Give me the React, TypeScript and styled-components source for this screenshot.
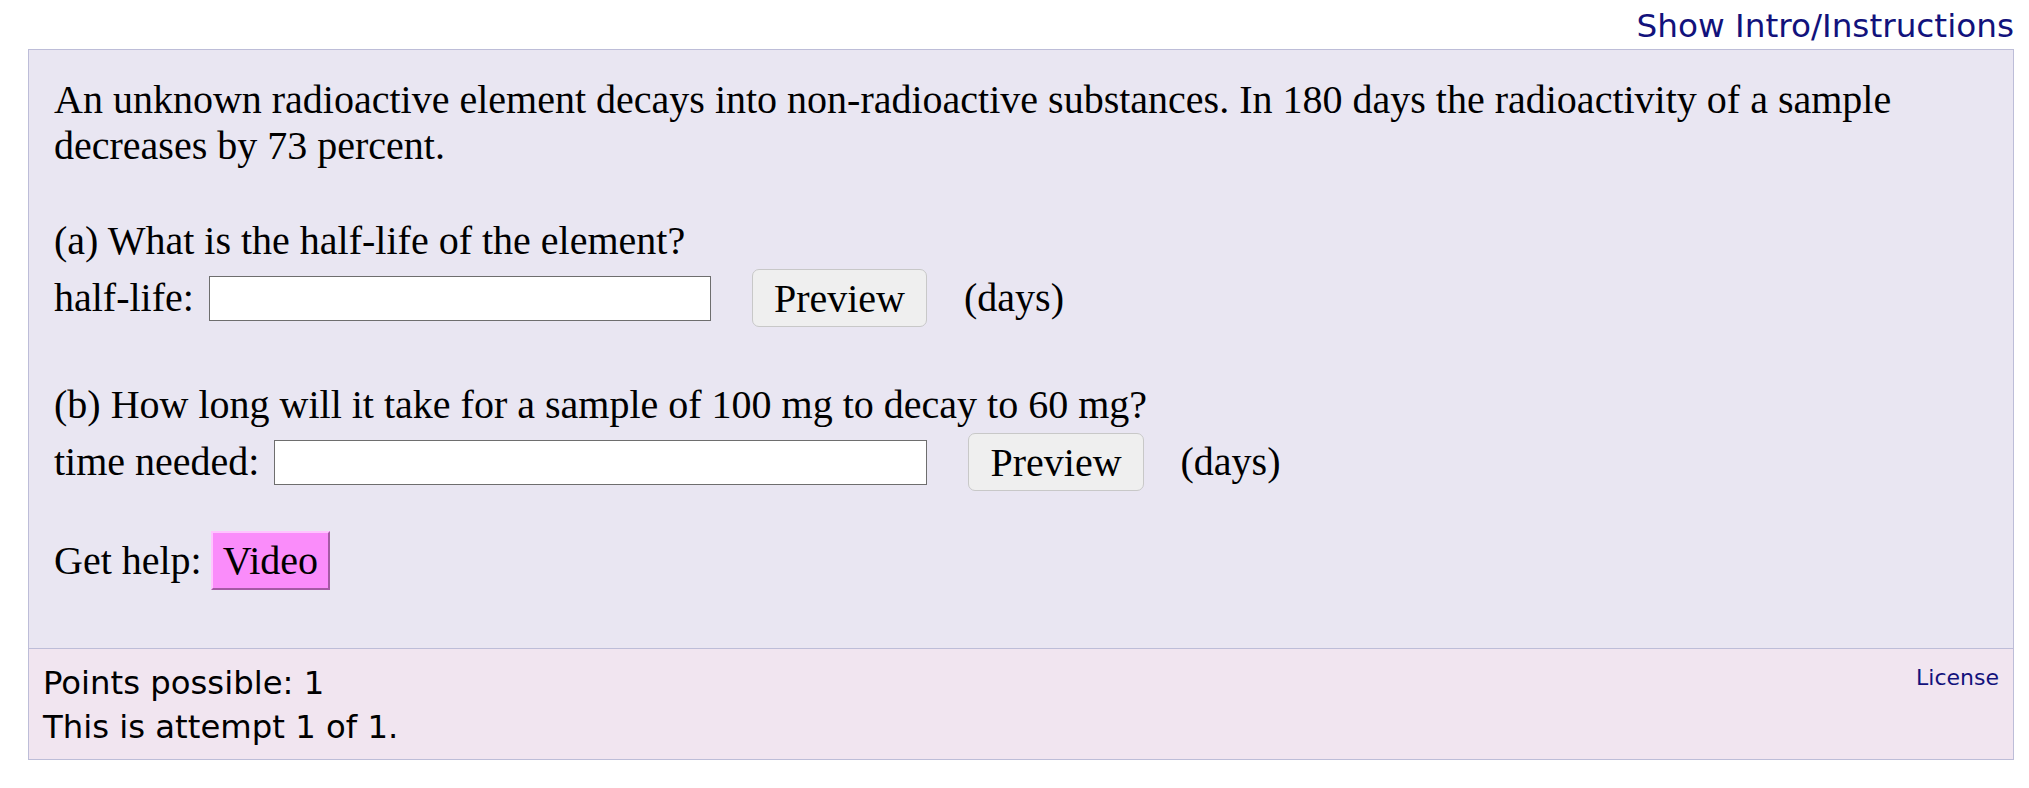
import React from "react";
import styled, { createGlobalStyle } from "styled-components";

const GlobalStyle = createGlobalStyle`
  html, body {
    margin: 0;
    padding: 0;
    background: #ffffff;
  }
  body {
    font-family: "Liberation Serif", "Times New Roman", serif;
    color: #000;
  }
`;

const Page = styled.div`
  padding: 0 15px 0 28px;
`;

const TopBar = styled.div`
  display: flex;
  justify-content: flex-end;
  padding-top: 6px;
  margin-bottom: 3px;
`;

const NavLink = styled.a`
  font-family: "DejaVu Sans", Verdana, sans-serif;
  font-size: 32.7px;
  line-height: 40px;
  color: #12127c;
  text-decoration: none;
  cursor: pointer;
`;

const QuestionBox = styled.div`
  border: 1px solid #bdbdd8;
`;

const QuestionBody = styled.div`
  background: #e9e6f2;
  padding: 27px 25px 58px;
  font-size: 40px;
  line-height: 46px;
`;

const Para = styled.p<{ $top?: number }>`
  margin: ${(p) => p.$top ?? 0}px 0 0;
`;

const AnswerRow = styled.div<{ $top: number; $h?: number }>`
  display: flex;
  align-items: center;
  height: ${(p) => p.$h ?? 58}px;
  margin-top: ${(p) => p.$top}px;
`;

const Label = styled.span`
  white-space: nowrap;
`;

const AnswerInput = styled.input<{ $w: number }>`
  box-sizing: border-box;
  width: ${(p) => p.$w}px;
  height: 45px;
  margin: 0 0 0 15px;
  border: 1px solid #6e6e6e;
  background: #ffffff;
  font-family: inherit;
  font-size: 28px;
  padding: 0 6px;
`;

const PreviewButton = styled.button`
  box-sizing: border-box;
  height: 58px;
  margin-left: 41px;
  padding: 0 21px;
  border: 1px solid #c8c8c8;
  border-radius: 7px;
  background: #efefef;
  font-family: "Liberation Serif", "Times New Roman", serif;
  font-size: 40px;
  color: #000;
  cursor: pointer;
`;

const Unit = styled.span`
  margin-left: 37px;
`;

const HelpButton = styled.button`
  box-sizing: border-box;
  height: 59px;
  margin-left: 9px;
  padding: 0 10px;
  border-width: 2px;
  border-style: solid;
  border-color: #ffc4ff #a45aa4 #a45aa4 #ffc4ff;
  background: #fa8cfa;
  font-family: "Liberation Serif", "Times New Roman", serif;
  font-size: 40px;
  color: #000;
  cursor: pointer;
`;

const Footer = styled.div`
  display: flex;
  justify-content: space-between;
  align-items: flex-start;
  border-top: 1px solid #bdbdd8;
  background: #f1e5f0;
  padding: 12px 14px 10px;
  font-family: "DejaVu Sans", Verdana, sans-serif;
`;

const FooterLines = styled.div`
  font-size: 32.3px;
  line-height: 44px;
  color: #000;
`;

const LicenseLink = styled.a`
  margin-top: 2px;
  font-size: 22px;
  line-height: 30px;
  color: #12127c;
  text-decoration: none;
  cursor: pointer;
`;

export default function App() {
  return (
    <Page>
      <GlobalStyle />
      <TopBar>
        <NavLink>Show Intro/Instructions</NavLink>
      </TopBar>
      <QuestionBox>
        <QuestionBody>
          <Para>
            An unknown radioactive element decays into non-radioactive substances. In 180 days the
            radioactivity of a sample decreases by 73 percent.
          </Para>
          <Para $top={49}>(a) What is the half-life of the element?</Para>
          <AnswerRow $top={5}>
            <Label>half-life:</Label>
            <AnswerInput $w={502} type="text" />
            <PreviewButton>Preview</PreviewButton>
            <Unit>(days)</Unit>
          </AnswerRow>
          <Para $top={55}>(b) How long will it take for a sample of 100 mg to decay to 60 mg?</Para>
          <AnswerRow $top={5}>
            <Label>time needed:</Label>
            <AnswerInput $w={653} type="text" />
            <PreviewButton>Preview</PreviewButton>
            <Unit>(days)</Unit>
          </AnswerRow>
          <AnswerRow $top={40} $h={59}>
            <Label>Get help:</Label>
            <HelpButton>Video</HelpButton>
          </AnswerRow>
        </QuestionBody>
        <Footer>
          <FooterLines>
            <div>Points possible: 1</div>
            <div>This is attempt 1 of 1.</div>
          </FooterLines>
          <LicenseLink>License</LicenseLink>
        </Footer>
      </QuestionBox>
    </Page>
  );
}
